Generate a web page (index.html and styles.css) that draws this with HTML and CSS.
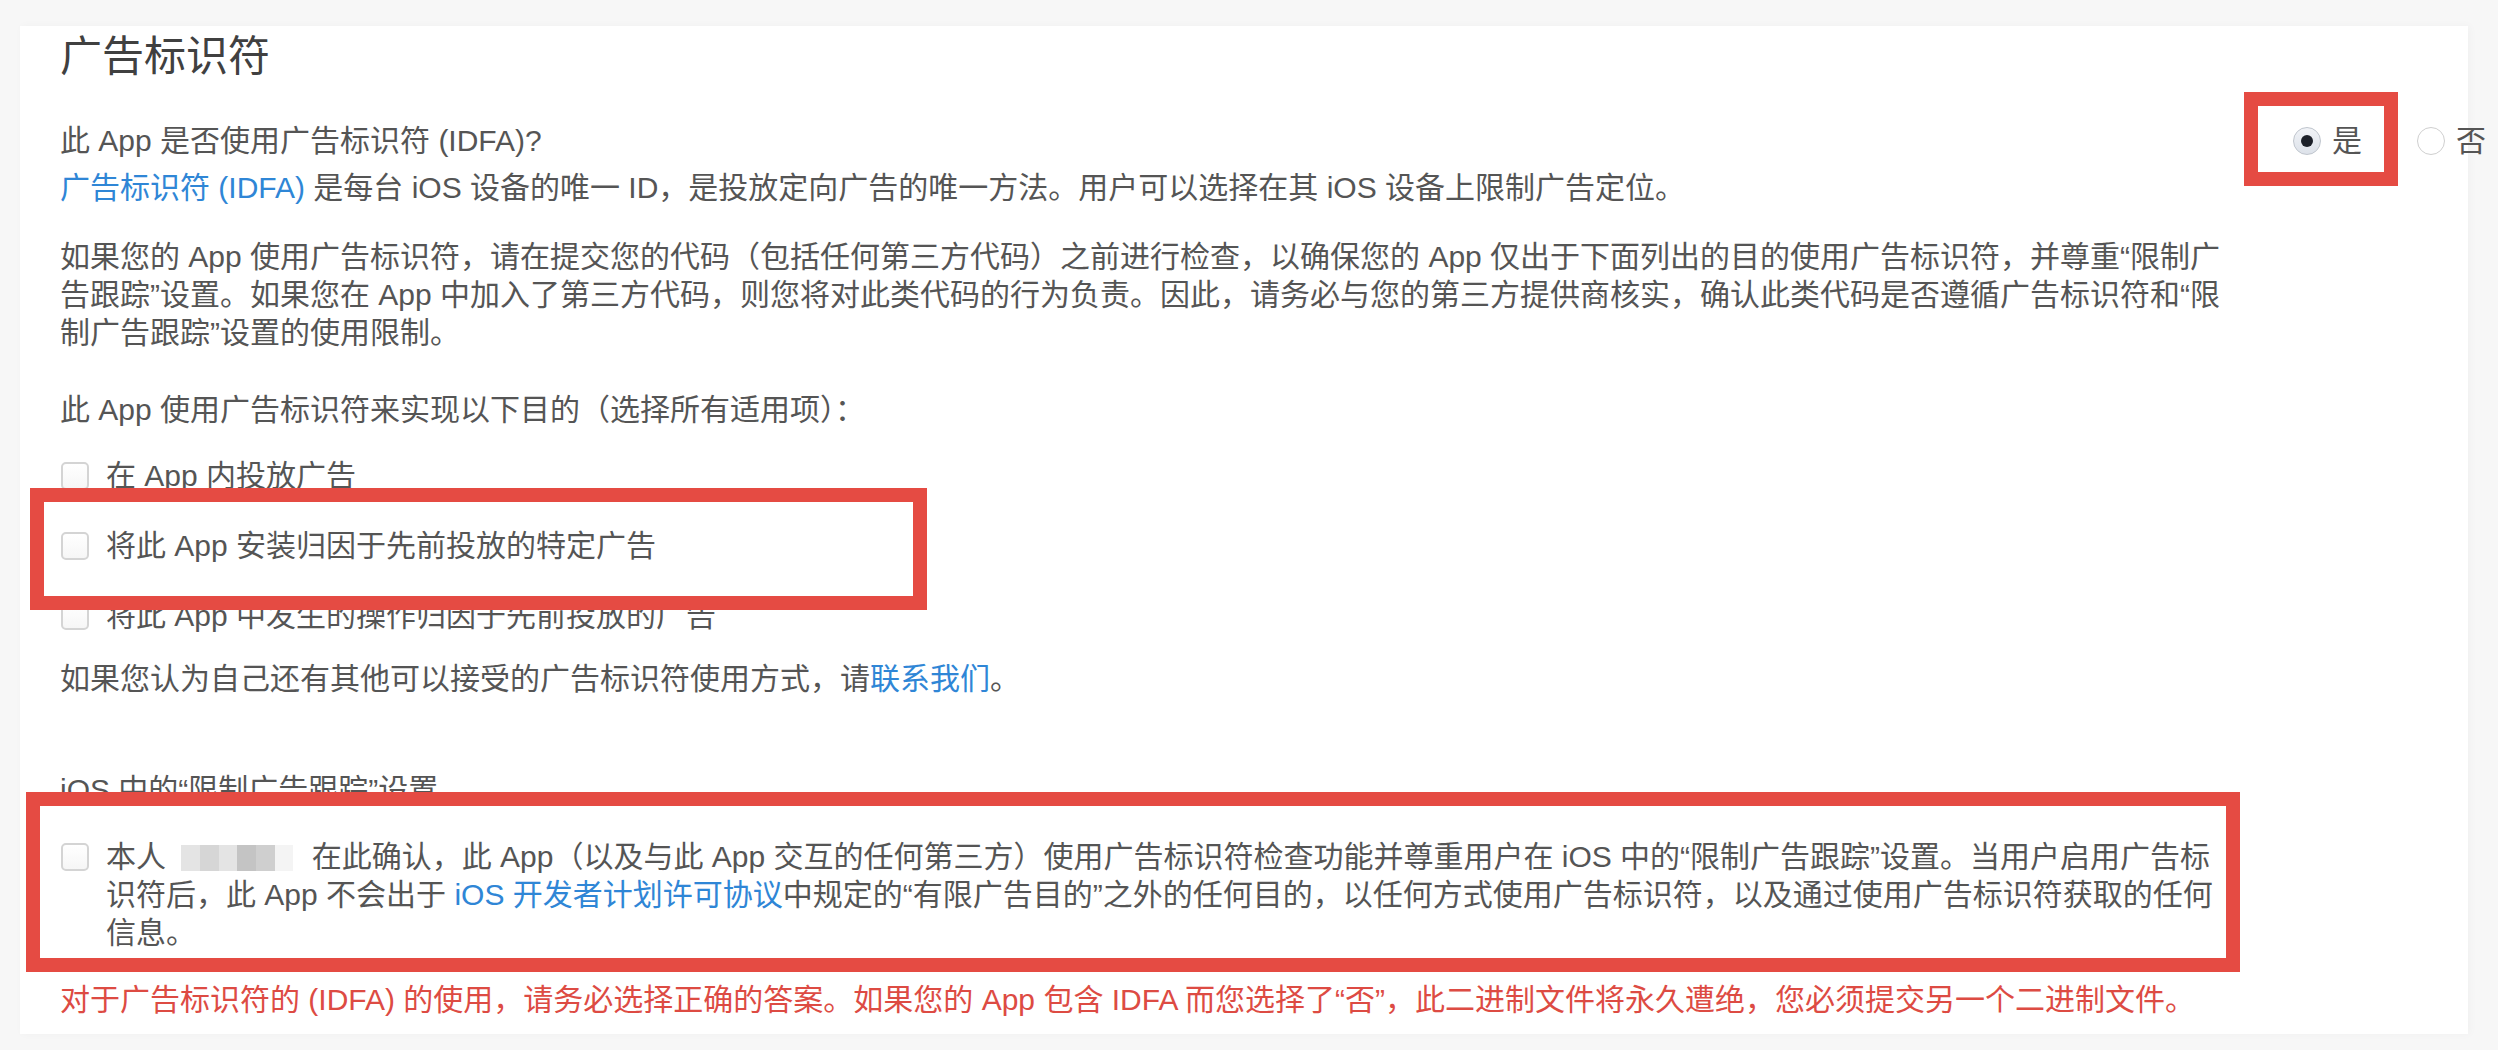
FILE: index.html
```html
<!DOCTYPE html>
<html lang="zh-CN">

<head>
      <meta charset="UTF-8">
      <meta name="viewport" content="width=device-width, initial-scale=1.0">
      <title>广告标识符</title>
      <link rel="stylesheet" href="styles.css">
</head>

<body>
      <div class="page">
            <section class="card">
                  <h1 class="title">广告标识符</h1>

                  <div class="question-row">
                        <p class="question">此 App 是否使用广告标识符 (IDFA)?</p>
                        <div class="choices">
                              <label class="choice"><span class="radio checked"></span>是</label>
                              <label class="choice"><span class="radio"></span>否</label>
                        </div>
                  </div>

                  <p class="intro"><a href="#" class="link">广告标识符 (IDFA)</a> 是每台 iOS 设备的唯一 ID，是投放定向广告的唯一方法。用户可以选择在其 iOS 设备上限制广告定位。</p>

                  <p class="text">如果您的 App 使用广告标识符，请在提交您的代码（包括任何第三方代码）之前进行检查，以确保您的 App 仅出于下面列出的目的使用广告标识符，并尊重“限制广告跟踪”设置。如果您在 App 中加入了第三方代码，则您将对此类代码的行为负责。因此，请务必与您的第三方提供商核实，确认此类代码是否遵循广告标识符和“限制广告跟踪”设置的使用限制。</p>

                  <p class="label">此 App 使用广告标识符来实现以下目的（选择所有适用项）：</p>

                  <ul class="options">
                        <li class="option"><span class="checkbox"></span>在 App 内投放广告</li>
                        <li class="option"><span class="checkbox"></span>将此 App 安装归因于先前投放的特定广告</li>
                        <li class="option"><span class="checkbox"></span>将此 App 中发生的操作归因于先前投放的广告</li>
                  </ul>

                  <p class="contact">如果您认为自己还有其他可以接受的广告标识符使用方式，请<a href="#" class="link">联系我们</a>。</p>

                  <p class="label label-tracking">iOS 中的“限制广告跟踪”设置</p>

                  <div class="confirm">
                        <span class="checkbox"></span>
                        <p class="confirm-text">本人 <span class="blurred"><i></i><i></i><i></i><i></i><i></i><i></i></span> 在此确认，此 App（以及与此 App 交互的任何第三方）使用广告标识符检查功能并尊重用户在 iOS 中的“限制广告跟踪”设置。当用户启用广告标识符后，此 App 不会出于 <a href="#" class="link">iOS 开发者计划许可协议</a>中规定的“有限广告目的”之外的任何目的，以任何方式使用广告标识符，以及通过使用广告标识符获取的任何信息。</p>
                  </div>

                  <p class="warning">对于广告标识符的 (IDFA) 的使用，请务必选择正确的答案。如果您的 App 包含 IDFA 而您选择了“否”，此二进制文件将永久遭绝，您必须提交另一个二进制文件。</p>

                  <!-- red annotation frames -->
                  <div class="mark mark-yes"></div>
                  <div class="mark mark-install"></div>
                  <div class="mark mark-confirm"></div>
            </section>
      </div>
</body>

</html>
```

FILE: styles.css
```css
/* page */
body {
      margin: 0;
      background-color: #f7f7f7;
      font-family: "Liberation Sans", "Noto Sans CJK SC", sans-serif;
      color: #555;
}

.page {
      padding: 26px 30px 16px 20px;
}

/* white card */
.card {
      position: relative;
      background-color: #fff;
      padding: 6px 0 15px 40px;
      box-shadow: 2px 0 8px rgba(0, 0, 0, 0.03);
}

.title {
      margin: 0;
      font-size: 42px;
      line-height: 50px;
      font-weight: normal;
      color: #404040;
}

p {
      margin: 0;
      font-size: 30px;
      line-height: 38px;
}

.link {
      color: #2f86d6;
      text-decoration: none;
}

/* question + radios */
.question-row {
      display: flex;
      align-items: center;
      margin-top: 40px;
      height: 38px;
}

.choices {
      display: flex;
      align-items: center;
      margin-left: auto;
      margin-right: -18px;
      gap: 55px;
}

.choice {
      display: flex;
      align-items: center;
      gap: 11px;
      font-size: 30px;
      line-height: 38px;
}

.radio {
      width: 26px;
      height: 26px;
      border: 1px solid #cfcfcf;
      border-radius: 50%;
      background-color: #fff;
      display: flex;
      align-items: center;
      justify-content: center;
}

.radio.checked {
      border-color: #bfc5cd;
      background: linear-gradient(#f1f3f7, #dde2ea);
}

.radio.checked::after {
      content: "";
      width: 12px;
      height: 12px;
      border-radius: 50%;
      background-color: #1c2029;
}

.intro {
      margin-top: 9px;
}

.text {
      margin-top: 31px;
      width: 2165px;
}

.label {
      margin-top: 39px;
}

/* checkbox list */
.options {
      list-style: none;
      margin: 28px 0 0;
      padding: 0;
}

.option {
      display: flex;
      align-items: center;
      gap: 17px;
      padding-left: 1px;
      font-size: 30px;
      line-height: 38px;
}

.option + .option {
      margin-top: 32px;
}

.checkbox {
      flex: none;
      width: 24px;
      height: 24px;
      border: 2px solid #d4d4d4;
      border-radius: 5px;
      background: linear-gradient(#fff, #f6f6f6);
}

.contact {
      margin-top: 25px;
}

.label-tracking {
      margin-top: 73px;
}

/* confirmation block */
.confirm {
      display: flex;
      align-items: flex-start;
      gap: 17px;
      margin-top: 29px;
      padding-left: 1px;
}

.confirm .checkbox {
      margin-top: 5px;
}

.confirm-text {
      width: 2112px;
}

/* pixelated name */
.blurred {
      display: inline-flex;
      vertical-align: -4px;
      height: 26px;
      width: 112px;
      margin: 0 10px 0 7px;
      background-color: #efefef;
}

.blurred i {
      flex: 1;
      background-color: #e4e4e4;
}

.blurred i:nth-child(2) {
      background-color: #d6d6d6;
}

.blurred i:nth-child(4) {
      background-color: #c4c4c4;
}

.blurred i:nth-child(5) {
      background-color: #cfcfcf;
}

.blurred i:nth-child(6) {
      background-color: #f4f4f4;
}

.warning {
      margin-top: 29px;
      color: #dd4b43;
}

/* red annotation frames */
.mark {
      position: absolute;
      border: 14px solid #e54b43;
      box-sizing: border-box;
}

.mark-yes {
      left: 2224px;
      top: 66px;
      width: 154px;
      height: 94px;
}

.mark-install {
      left: 10px;
      top: 462px;
      width: 897px;
      height: 122px;
}

.mark-confirm {
      left: 6px;
      top: 766px;
      width: 2214px;
      height: 180px;
}
```
